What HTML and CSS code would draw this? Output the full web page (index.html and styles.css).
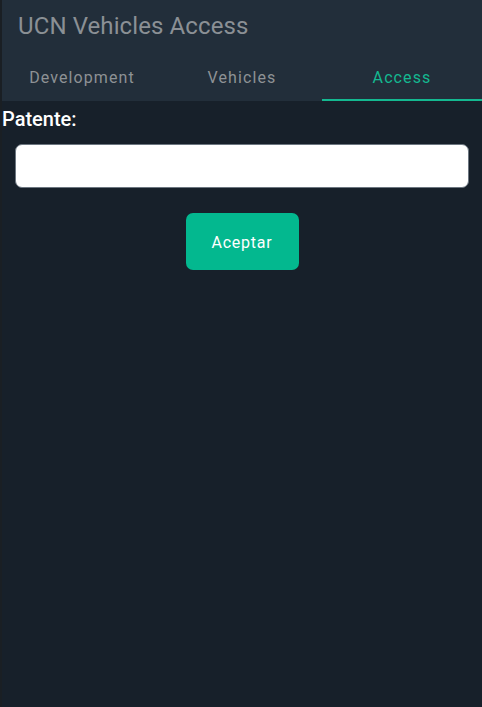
FILE: index.html
```html
<!DOCTYPE html>
<html lang="es">
<head>
<meta charset="utf-8">
<title>UCN Vehicles Access</title>
<link rel="stylesheet" href="styles.css">
</head>
<body>
<div class="app">
  <header class="header">
    <h1 class="title">UCN Vehicles Access</h1>
    <nav class="tabs">
      <div class="tab">Development</div>
      <div class="tab">Vehicles</div>
      <div class="tab active">Access</div>
    </nav>
  </header>
  <main class="content">
    <label class="label" for="patente">Patente:</label>
    <div class="field">
      <input id="patente" class="input" type="text">
    </div>
    <div class="actions">
      <button class="btn" type="button">Aceptar</button>
    </div>
  </main>
</div>
</body>
</html>
```
FILE: styles.css
```css
* { box-sizing: border-box; }
html, body { margin: 0; height: 100%; }
body {
  font-family: Roboto, "Noto Sans", sans-serif;
  background: #1a1f24;
}
.app {
  margin-left: 2px;
  height: 100%;
  background: #17202a;
  display: flex;
  flex-direction: column;
}
.header {
  background: #222e3a;
  height: 101px;
  display: flex;
  flex-direction: column;
}
.title {
  margin: 0;
  padding: 11px 0 0 16px;
  height: 52px;
  font-weight: 400;
  font-size: 24px;
  line-height: 30px;
  letter-spacing: 0.1px;
  color: #8b9095;
}
.tabs {
  display: flex;
  flex: 1;
}
.tab {
  flex: 1;
  display: flex;
  align-items: center;
  justify-content: center;
  padding-top: 3px;
  font-size: 16px;
  letter-spacing: 1.1px;
  color: #8e9295;
  border-bottom: 2px solid transparent;
}
.tab.active {
  color: #14b890;
  border-bottom-color: #14b890;
}
.content {
  display: flex;
  flex-direction: column;
}
.label {
  padding: 6px 0 0 0;
  font-size: 20px;
  font-weight: 500;
  line-height: 24px;
  color: #ffffff;
}
.field {
  padding: 13px 13px 0 13px;
}
.input {
  display: block;
  width: 100%;
  height: 44px;
  border: 1px solid #6c7680;
  border-radius: 7px;
  background: #ffffff;
  outline: none;
}
.actions {
  display: flex;
  justify-content: center;
  padding-top: 25px;
}
.btn {
  width: 113px;
  height: 57px;
  padding: 2px 0 0 0;
  border: none;
  border-radius: 7px;
  background: #03b88f;
  color: #ffffff;
  font-family: Roboto, "Noto Sans", sans-serif;
  font-size: 16px;
  letter-spacing: 0.75px;
}
```
